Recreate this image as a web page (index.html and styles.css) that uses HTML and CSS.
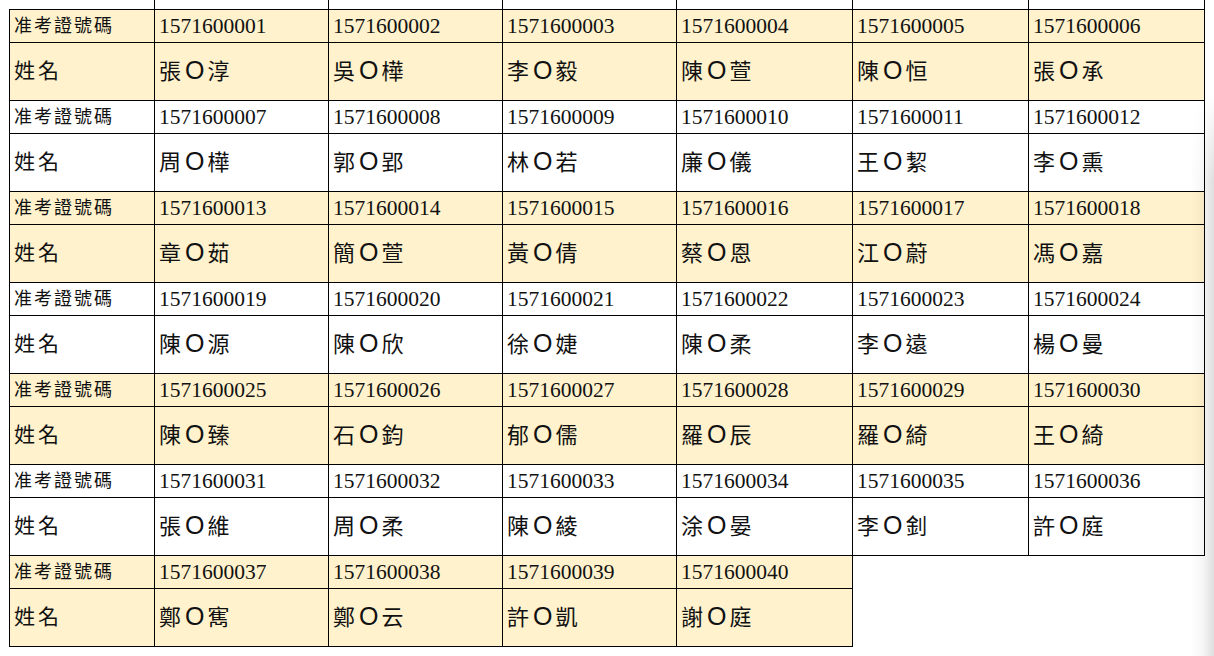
FILE: index.html
```html
<!DOCTYPE html>
<html lang="zh-Hant">
<head>
<meta charset="utf-8">
<title>准考證號碼</title>
<link rel="stylesheet" href="styles.css">
</head>
<body>
<table class="roster">
  <colgroup>
    <col class="c-label"><col class="c-a"><col class="c-a"><col class="c-a"><col class="c-b"><col class="c-b"><col class="c-b">
  </colgroup>
  <tbody>
    <tr class="cap"><td class="cap-first"></td><td></td><td></td><td></td><td></td><td></td><td></td></tr>
    <tr class="id tan"><td class="label">准考證號碼</td><td>1571600001</td><td>1571600002</td><td>1571600003</td><td>1571600004</td><td>1571600005</td><td>1571600006</td></tr>
    <tr class="nm tan"><td class="label">姓名</td><td>張<span class="o">O</span>淳</td><td>吳<span class="o">O</span>樺</td><td>李<span class="o">O</span>毅</td><td>陳<span class="o">O</span>萱</td><td>陳<span class="o">O</span>恒</td><td>張<span class="o">O</span>承</td></tr>
    <tr class="id"><td class="label">准考證號碼</td><td>1571600007</td><td>1571600008</td><td>1571600009</td><td>1571600010</td><td>1571600011</td><td>1571600012</td></tr>
    <tr class="nm"><td class="label">姓名</td><td>周<span class="o">O</span>樺</td><td>郭<span class="o">O</span>郢</td><td>林<span class="o">O</span>若</td><td>廉<span class="o">O</span>儀</td><td>王<span class="o">O</span>絜</td><td>李<span class="o">O</span>熏</td></tr>
    <tr class="id tan"><td class="label">准考證號碼</td><td>1571600013</td><td>1571600014</td><td>1571600015</td><td>1571600016</td><td>1571600017</td><td>1571600018</td></tr>
    <tr class="nm tan"><td class="label">姓名</td><td>章<span class="o">O</span>茹</td><td>簡<span class="o">O</span>萱</td><td>黃<span class="o">O</span>倩</td><td>蔡<span class="o">O</span>恩</td><td>江<span class="o">O</span>蔚</td><td>馮<span class="o">O</span>嘉</td></tr>
    <tr class="id"><td class="label">准考證號碼</td><td>1571600019</td><td>1571600020</td><td>1571600021</td><td>1571600022</td><td>1571600023</td><td>1571600024</td></tr>
    <tr class="nm"><td class="label">姓名</td><td>陳<span class="o">O</span>源</td><td>陳<span class="o">O</span>欣</td><td>徐<span class="o">O</span>婕</td><td>陳<span class="o">O</span>柔</td><td>李<span class="o">O</span>遠</td><td>楊<span class="o">O</span>曼</td></tr>
    <tr class="id tan"><td class="label">准考證號碼</td><td>1571600025</td><td>1571600026</td><td>1571600027</td><td>1571600028</td><td>1571600029</td><td>1571600030</td></tr>
    <tr class="nm tan"><td class="label">姓名</td><td>陳<span class="o">O</span>臻</td><td>石<span class="o">O</span>鈞</td><td>郁<span class="o">O</span>儒</td><td>羅<span class="o">O</span>辰</td><td>羅<span class="o">O</span>綺</td><td>王<span class="o">O</span>綺</td></tr>
    <tr class="id"><td class="label">准考證號碼</td><td>1571600031</td><td>1571600032</td><td>1571600033</td><td>1571600034</td><td>1571600035</td><td>1571600036</td></tr>
    <tr class="nm"><td class="label">姓名</td><td>張<span class="o">O</span>維</td><td>周<span class="o">O</span>柔</td><td>陳<span class="o">O</span>綾</td><td>涂<span class="o">O</span>晏</td><td>李<span class="o">O</span>釗</td><td>許<span class="o">O</span>庭</td></tr>
    <tr class="id tan"><td class="label">准考證號碼</td><td>1571600037</td><td>1571600038</td><td>1571600039</td><td>1571600040</td><td class="empty"></td><td class="empty"></td></tr>
    <tr class="nm tan"><td class="label">姓名</td><td>鄭<span class="o">O</span>寯</td><td>鄭<span class="o">O</span>云</td><td>許<span class="o">O</span>凱</td><td>謝<span class="o">O</span>庭</td><td class="empty"></td><td class="empty"></td></tr>
  </tbody>
</table>
<div class="edge-shadow"></div>
</body>
</html>
```

FILE: styles.css
```css
html, body {
  margin: 0;
  padding: 0;
  background: #ffffff;
}

body {
  padding-left: 9px;
  overflow: hidden;
  height: 656px;
  font-family: "Liberation Serif", "Noto Sans CJK TC", serif;
  color: #111;
}

.roster {
  border-collapse: collapse;
  table-layout: fixed;
  width: 1196px;
}

.c-label { width: 145px; }
.c-a { width: 174px; }
.c-b { width: 176px; }

.roster td {
  border: 1px solid #000;
  padding: 0 0 0 4px;
  vertical-align: middle;
  white-space: nowrap;
  overflow: hidden;
}

.cap td {
  height: 9px;
  border-top: none;
  background: #fff;
}

.cap td.cap-first {
  border-left: none;
}

.id td {
  height: 31.8px;
  font-size: 21.5px;
  line-height: 24px;
}

.nm td {
  height: 57.2px;
  font-size: 22px;
  line-height: 28px;
  letter-spacing: 2px;
}

.nm .o {
  font-family: "Liberation Sans", sans-serif;
  font-size: 25px;
  line-height: 28px;
  letter-spacing: 0;
  margin: 0 3px 0 2px;
}

.id td.label {
  font-size: 18px;
  letter-spacing: 2px;
}

.nm td.label {
  font-size: 21px;
  letter-spacing: 3px;
}

.tan td {
  background: #fff2cc;
}

.roster td.empty {
  background: #fff;
  border: none;
}

.edge-shadow {
  position: fixed;
  top: 0;
  right: 0;
  width: 24px;
  height: 656px;
  background: linear-gradient(to right, rgba(0, 0, 0, 0), rgba(0, 0, 0, 0.03) 50%, rgba(0, 0, 0, 0.13));
  -webkit-mask-image: linear-gradient(to bottom, transparent 0, transparent 95px, #000 180px);
  mask-image: linear-gradient(to bottom, transparent 0, transparent 95px, #000 180px);
  pointer-events: none;
}
```
